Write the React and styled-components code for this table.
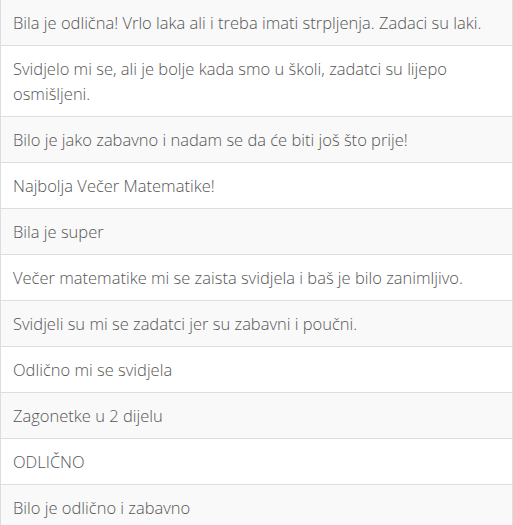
import styled, { createGlobalStyle } from "styled-components";

const GlobalStyle = createGlobalStyle`
  html, body {
    margin: 0;
    padding: 0;
    background: #ffffff;
  }
  body {
    font-family: "Open Sans", "Liberation Sans", sans-serif;
  }
`;

const Table = styled.table`
  width: 513px;
  border-collapse: collapse;
  border-left: 1px solid #dddddd;
  border-right: 1px solid #dddddd;
`;

const Row = styled.tr`
  background: ${({ $striped }) => ($striped ? "#f9f9f9" : "#ffffff")};
  border-bottom: 1px solid #dddddd;
`;

const Cell = styled.td`
  padding: 10px 12px;
  font-size: 16.5px;
  font-weight: 300;
  line-height: 25px;
  color: #555555;
  vertical-align: top;
`;

const comments = [
  "Bila je odlična! Vrlo laka ali i treba imati strpljenja. Zadaci su laki.",
  "Svidjelo mi se, ali je bolje kada smo u školi, zadatci su lijepo osmišljeni.",
  "Bilo je jako zabavno i nadam se da će biti još što prije!",
  "Najbolja Večer Matematike!",
  "Bila je super",
  "Večer matematike mi se zaista svidjela i baš je bilo zanimljivo.",
  "Svidjeli su mi se zadatci jer su zabavni i poučni.",
  "Odlično mi se svidjela",
  "Zagonetke u 2 dijelu",
  "ODLIČNO",
  "Bilo je odlično i zabavno",
];

export default function App() {
  return (
    <>
      <GlobalStyle />
      <Table>
        <tbody>
          {comments.map((text, i) => (
            <Row key={i} $striped={i % 2 === 0}>
              <Cell>{text}</Cell>
            </Row>
          ))}
        </tbody>
      </Table>
    </>
  );
}
